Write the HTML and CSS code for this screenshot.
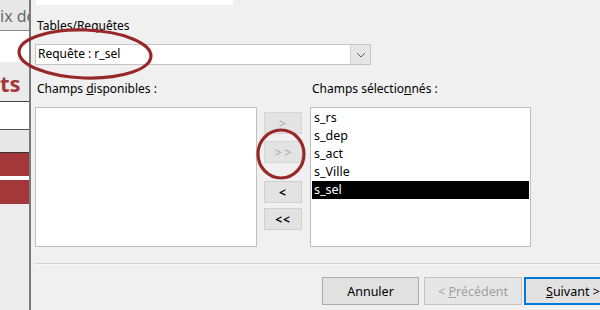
FILE: index.html
```html
<!DOCTYPE html>
<html lang="fr">
<head>
<meta charset="utf-8">
<link rel="stylesheet" href="styles.css">
</head>
<body>
<div class="page">
  <div class="bg">
    <div class="bg-title">ix de</div>
    <div class="bg-white"></div>
    <div class="bg-heading">ts</div>
    <div class="bg-row white"></div>
    <div class="bg-row gray"></div>
    <div class="bg-row red"></div>
    <div class="bg-gap"></div>
    <div class="bg-row red2"></div>
    <div class="bg-rest"></div>
  </div>
  <div class="dialog">
    <div class="topbox"></div>
    <div class="label first">Tables/Requêtes</div>
    <div class="combo">
      <span class="combo-text">Requête : r_sel</span>
      <span class="combo-btn">
        <svg width="10" height="6" viewBox="0 0 10 6"><path d="M1 1 L5 5 L9 1" fill="none" stroke="#606060" stroke-width="1"/></svg>
      </span>
    </div>
    <div class="fields">
      <div class="label">Champs <u>d</u>isponibles :</div>
      <div></div>
      <div class="label">Champs sélectio<u>n</u>nés :</div>
      <div class="list"></div>
      <div class="movers">
        <div class="mbtn dis">&gt;</div>
        <div class="mbtn dis wide">&gt;&gt;</div>
        <div class="mbtn en b3">&lt;</div>
        <div class="mbtn en">&lt;&lt;</div>
      </div>
      <div class="list items">
        <div class="item">s_rs</div>
        <div class="item">s_dep</div>
        <div class="item">s_act</div>
        <div class="item">s_Ville</div>
        <div class="item sel">s_sel</div>
      </div>
    </div>
    <div class="sep"></div>
    <div class="actions">
      <div class="btn"><span>Annuler</span></div>
      <div class="btn dis"><span>&lt; <u>P</u>récédent</span></div>
      <div class="btn def"><span><u>S</u>uivant &gt;</span></div>
    </div>
  </div>
  <svg class="marks" width="600" height="310" viewBox="0 0 600 310">
    <ellipse cx="85" cy="54" rx="66" ry="24" transform="rotate(2 85 54)" fill="none" stroke="#982828" stroke-width="3.2"/>
    <ellipse cx="281" cy="154" rx="23" ry="24" fill="none" stroke="#982828" stroke-width="3.2"/>
  </svg>
</div>
</body>
</html>
```
FILE: styles.css
```css
html, body {
  margin: 0;
  padding: 0;
}
body {
  width: 600px;
  height: 310px;
  overflow: hidden;
  background: #f0f0f0;
  font-family: "Noto Sans", "DejaVu Sans", sans-serif;
  font-size: 12px;
  color: #000;
}
.page {
  position: relative;
  display: flex;
  width: 600px;
  height: 310px;
}
.bg {
  width: 29px;
  flex: none;
  background: #e8e8e8;
  border-right: 2px solid #7a7a7a;
  overflow: hidden;
  display: flex;
  flex-direction: column;
}
.bg-title {
  border-bottom: 1px solid #8a8a8a;
  font-size: 16px;
  color: #6a6a6a;
  white-space: nowrap;
  padding: 7px 0 0 0;
  box-sizing: border-box;
  height: 31px;
  line-height: 18px;
}
.bg-white {
  height: 31px;
  background: #fff;
}
.bg-heading {
  height: 40px;
  background: #ebebeb;
  color: #a4373a;
  font-weight: bold;
  font-size: 22px;
  line-height: 30px;
  padding-top: 6px;
  box-sizing: border-box;
  white-space: nowrap;
  border-bottom: 1px solid #444;
}
.bg-row.white {
  height: 27px;
  background: #fff;
  border-bottom: 1px solid #555;
}
.bg-row.gray {
  height: 22px;
  background: #e8e8e8;
  border-bottom: 1px solid #333;
}
.bg-row.red {
  height: 23px;
  background: #a4373a;
}
.bg-gap {
  height: 4px;
  background: #fff;
}
.bg-row.red2 {
  height: 24px;
  background: #a4373a;
}
.bg-rest {
  flex: 1;
  background: #ececec;
}
.dialog {
  flex: 1;
  display: flex;
  flex-direction: column;
  padding-left: 4px;
  background: #f0f0f0;
}
.topbox {
  margin-left: 1px;
  width: 197px;
  height: 5px;
  background: #fff;
}
.label {
  height: 16px;
  line-height: 16px;
  white-space: nowrap;
}
.label.first {
  margin-top: 13px;
  margin-left: 2px;
}
.combo {
  margin-top: 10px;
  width: 336px;
  height: 21px;
  box-sizing: border-box;
  border: 1px solid #c4c4c4;
  background: #fff;
  display: flex;
  align-items: stretch;
}
.combo-text {
  flex: 1;
  padding-left: 2px;
  line-height: 18px;
}
.combo-btn {
  width: 19px;
  background: #e6e6e6;
  border-left: 1px solid #d0d0d0;
  display: flex;
  align-items: center;
  justify-content: center;
}
.fields {
  margin-top: 16px;
  display: grid;
  grid-template-columns: 222px 53px 221px;
  grid-template-rows: 16px 140px;
  row-gap: 10px;
}
.fields .label {
  padding-left: 2px;
}
.list {
  background: #fff;
  border: 1px solid #bfbfbf;
  box-sizing: border-box;
}
.movers {
  margin-left: 7px;
  width: 38px;
  display: flex;
  flex-direction: column;
  padding-top: 5px;
}
.list.items {
  padding: 1px;
}
.item {
  height: 18px;
  line-height: 18px;
  padding-left: 2px;
  white-space: nowrap;
  font-size: 12.5px;
}
.item.sel {
  background: #000;
  color: #fff;
}
.mbtn {
  height: 22px;
  box-sizing: border-box;
  border: 1px solid #d6d6d6;
  background: #e3e3e3;
  display: flex;
  align-items: center;
  justify-content: center;
  font-size: 12px;
  margin-bottom: 7px;
  letter-spacing: 1px;
}
.mbtn.wide {
  letter-spacing: 3px;
  padding-left: 3px;
}
.mbtn.dis {
  color: #a6a6a6;
}
.mbtn.en {
  color: #000;
  font-weight: bold;
  border-color: #d0d0d0;
}
.mbtn.b3 {
  margin-top: 11px;
  margin-bottom: 5px;
}
.sep {
  margin-top: 16px;
  height: 1px;
  background: #d2d2d2;
  border-bottom: 1px solid #fafafa;
}
.actions {
  margin-top: 12px;
  margin-left: 287px;
  display: flex;
  height: 28px;
}
.btn {
  width: 97px;
  height: 28px;
  box-sizing: border-box;
  border: 1px solid #adadad;
  background: #e1e1e1;
  display: flex;
  align-items: center;
  justify-content: center;
  white-space: nowrap;
  flex: none;
  font-size: 12.5px;
}
.btn.dis {
  margin-left: 5px;
  width: 98px;
  border-color: #c4c4c4;
  background: #e6e6e6;
  color: #a0a0a0;
}
.btn.def {
  margin-left: 2px;
  width: 98px;
  border: 2px solid #0078d7;
  justify-content: flex-start;
  padding-left: 20px;
}
.marks {
  position: absolute;
  left: 0;
  top: 0;
  pointer-events: none;
}
```
